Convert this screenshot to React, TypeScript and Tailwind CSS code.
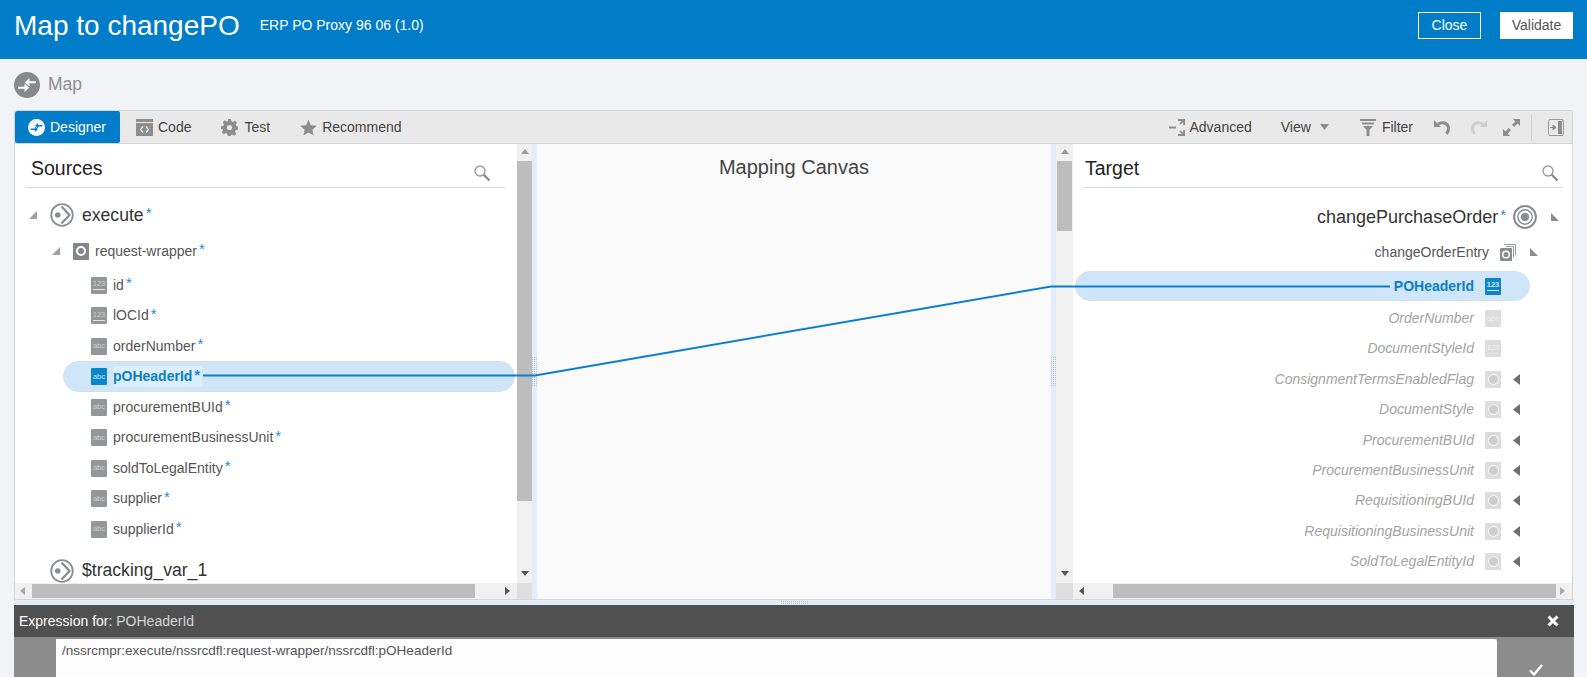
import React from 'react';

const SOURCE_ITEMS = [
  { name: 'id', kind: '123' },
  { name: 'lOCId', kind: '123' },
  { name: 'orderNumber', kind: 'abc' },
  { name: 'pOHeaderId', kind: 'abc', active: true },
  { name: 'procurementBUId', kind: 'abc' },
  { name: 'procurementBusinessUnit', kind: 'abc' },
  { name: 'soldToLegalEntity', kind: 'abc' },
  { name: 'supplier', kind: 'abc' },
  { name: 'supplierId', kind: 'abc' },
];

const TARGET_ITEMS = [
  { name: 'OrderNumber', kind: 'abc' },
  { name: 'DocumentStyleId', kind: '123' },
  { name: 'ConsignmentTermsEnabledFlag', kind: 'ring' },
  { name: 'DocumentStyle', kind: 'ring' },
  { name: 'ProcurementBUId', kind: 'ring' },
  { name: 'ProcurementBusinessUnit', kind: 'ring' },
  { name: 'RequisitioningBUId', kind: 'ring' },
  { name: 'RequisitioningBusinessUnit', kind: 'ring' },
  { name: 'SoldToLegalEntityId', kind: 'ring' },
];

const Star = () => <span className="ml-[2px] -mt-[5px] text-[15px] leading-none text-[#1e88e5]">*</span>;

const MapGlyph = ({ size, bg, fg }: { size: number; bg: string; fg: string }) => (
  <svg width={size} height={size} viewBox="0 0 26 26" className="shrink-0">
    <circle cx="13" cy="13" r="13" fill={bg} />
    <path d="M22 9.300h-6.500V6L10.800 10.300l4.700 4.300v-3.300H22zM4 16.700h6.500V20l4.700-4.300-4.700-4.300v3.300H4z" fill={fg} />
  </svg>
);

const Search = () => (
  <svg width="18" height="18" viewBox="0 0 18 18" fill="none" className="mt-[8px] shrink-0">
    <circle cx="7" cy="7" r="5" stroke="#9a9a9a" strokeWidth="1.4" />
    <path d="M10.8 10.8 16.5 16.5" stroke="#8a8a8a" strokeWidth="2.2" />
  </svg>
);

const ExecuteIcon = () => (
  <svg width="24" height="24" viewBox="0 0 24 24" fill="none" className="shrink-0">
    <circle cx="12" cy="12" r="10.800" stroke="#8a8d90" strokeWidth="1.800" />
    <circle cx="7.800" cy="12" r="2.800" fill="#8a8d90" />
    <path d="m11.500 3.500 8 8.500-8 8.500" stroke="#8a8d90" strokeWidth="2.200" />
  </svg>
);

const TypeIcon = ({ kind, active, faded }: { kind: string; active?: boolean; faded?: boolean }) => {
  const bg = active ? 'bg-[#0a86c9]' : faded ? 'bg-[#dcdcdc]' : 'bg-[#94979a]';
  if (kind === 'ring') {
    return (
      <span className={`flex h-[17px] w-[16px] shrink-0 items-center justify-center rounded-[1px] ${bg}`}>
        <span className="h-[11px] w-[11px] rounded-full border-[1.5px] border-white bg-[#cdcdcd]" />
      </span>
    );
  }
  return (
    <span
      className={`flex h-[17px] w-[16px] shrink-0 flex-col items-center justify-center rounded-[1px] text-[7.5px] leading-[8px] ${bg} ${
        active ? 'text-[#cfe6fa]' : 'text-[#cfcfcf]'
      } ${faded ? 'text-[#f2f2f2]' : ''}`}
    >
      {kind}
      {kind === '123' && <span className="mt-[1px] h-px w-[12px] bg-[#e4e4e4]" />}
    </span>
  );
};

const Corner = ({ className }: { className: string }) => (
  <svg width="8" height="8" viewBox="0 0 8 8" className={`shrink-0 ${className}`}>
    <path d="M8 0v8H0z" fill="#a0a0a0" />
  </svg>
);

const CornerRight = ({ className }: { className: string }) => (
  <svg width="8" height="8" viewBox="0 0 8 8" className={`shrink-0 ${className}`}>
    <path d="M0 0v8h8z" fill="#8d8d8d" />
  </svg>
);

const Arrow = ({ dir, color = '#555' }: { dir: 'u' | 'd' | 'l' | 'r'; color?: string }) => {
  const d = { u: 'M0 5 4 0l4 5z', d: 'M0 0h8L4 5z', l: 'M5 0v8L0 4z', r: 'M0 0v8l5-4z' }[dir];
  return (
    <svg width="8" height="8" viewBox="0 0 8 8" className="shrink-0">
      <path d={d} fill={color} />
    </svg>
  );
};

const Dots = ({ cols, rows }: { cols: number; rows: number }) => (
  <div className="grid gap-[1px]" style={{ gridTemplateColumns: `repeat(${cols}, 1px)` }}>
    {Array.from({ length: cols * rows }).map((_, i) => (
      <span key={i} className="h-px w-px bg-[#b9bfc5]" />
    ))}
  </div>
);

const Tab = ({ icon, label, className }: { icon: React.ReactNode; label: string; className: string }) => (
  <div className={`flex items-center text-[14px] text-[#444] ${className}`}>
    {icon}
    <span>{label}</span>
  </div>
);

export default function App() {
  return (
    <div className="relative h-[677px] w-[1587px] overflow-hidden bg-[#f1f3f6] font-['Liberation_Sans',Arial,sans-serif]">
      <header className="flex h-[59px] items-center bg-[#007cc8] pb-[8px] pl-[14px] pr-[14px] text-white">
        <h1 className="text-[28px] leading-none">Map to changePO</h1>
        <span className="ml-[20px] text-[14px]">ERP PO Proxy 96 06 (1.0)</span>
        <button className="ml-auto h-[27px] w-[63px] border border-white text-[14px]">Close</button>
        <button className="ml-[19px] h-[27px] w-[73px] bg-white text-[14px] text-[#555]">Validate</button>
      </header>

      <div className="flex h-[51px] items-center pl-[14px]">
        <MapGlyph size={26} bg="#868a8e" fg="#ffffff" />
        <span className="ml-[8px] text-[17.5px] text-[#8a8e92]">Map</span>
      </div>

      <div className="ml-[14px] w-[1559px] overflow-hidden rounded-t-[3px] border border-b-0 border-[#d6d6d6] bg-white">
        <div className="flex h-[33px] items-center border-b border-[#d6d6d6] bg-[#e9e9e9]">
          <div className="flex h-full w-[105px] items-center rounded-[2px] bg-[#007cc8] pl-[13px] text-[14px] text-white">
            <MapGlyph size={17} bg="#ffffff" fg="#007cc8" />
            <span className="ml-[5px]">Designer</span>
          </div>
          <Tab
            className="ml-[16px]"
            label="Code"
            icon={
              <svg width="17" height="17" viewBox="0 0 17 17" className="mr-[5px]">
                <path d="M0 0h17v3H0z" fill="#8d8d8d" />
                <path d="M0 4h17v13H0z" fill="#8d8d8d" />
                <path d="M7 7.5 4.5 10.5 7 13.5M10 7.5l2.5 3-2.5 3" stroke="#fff" strokeWidth="1.2" fill="none" />
              </svg>
            }
          />
          <Tab
            className="ml-[30px]"
            label="Test"
            icon={
              <svg width="17" height="17" viewBox="0 0 17 17" className="mr-[6px]">
                <path
                  d="M7 0h3l.4 2.3 1.6.7 2-1.3 2 2-1.3 2 .7 1.6L17 7.7v3l-2.3.4-.7 1.6 1.3 2-2 2-2-1.3-1.6.7L9.7 17h-3l-.4-2.3-1.6-.7-2 1.3-2-2 1.3-2-.7-1.6L0 10.3v-3l2.3-.4.7-1.6-1.3-2 2-2 2 1.3 1.6-.7z"
                  fill="#8d8d8d"
                />
                <circle cx="8.5" cy="8.5" r="2.6" fill="#e9e9e9" />
              </svg>
            }
          />
          <Tab
            className="ml-[30px]"
            label="Recommend"
            icon={
              <svg width="17" height="17" viewBox="0 0 17 17" className="mr-[5px]">
                <path d="m8.5.8 2.4 5.4 5.8.6-4.3 3.9 1.2 5.8-5.1-3-5.1 3 1.2-5.8L.3 6.8l5.8-.6z" fill="#8d8d8d" />
              </svg>
            }
          />
          <div className="ml-auto flex items-center text-[14px] text-[#444]">
            <svg width="17" height="17" viewBox="0 0 17 17" className="mr-[4px]">
              <path d="M0 7.500h7v2H0z" fill="#8d8d8d" />
              <path d="M9 0h7v6h-1.800V3.200l-2.600 2.400-1.200-1.200 2.500-2.500H9zM9 17h7v-6h-1.800v2.800l-2.600-2.400-1.200 1.200 2.500 2.500H9z" fill="#8d8d8d" />
            </svg>
            <span>Advanced</span>
            <span className="ml-[29px]">View</span>
            <svg width="9" height="6" viewBox="0 0 9 6" className="ml-[9px]">
              <path d="M0 0h9L4.5 6z" fill="#8d8d8d" />
            </svg>
            <svg width="16" height="17" viewBox="0 0 16 17" className="ml-[31px] mr-[6px]">
              <path d="M0 0h16v2H0zM1.500 3.500h13l-.9 2H2.400zM3 7h10l-3.500 4v6h-3v-6z" fill="#8d8d8d" />
            </svg>
            <span>Filter</span>
            <svg width="18" height="16" viewBox="0 0 18 16" fill="none" className="ml-[21px]">
              <path d="M0 1v7h7z" fill="#8d8d8d" />
              <path d="M4 5c4-2.500 9.500-1.500 10.500 3.500.4 2.500-.5 4.500-2 6.500" stroke="#8d8d8d" strokeWidth="3" />
            </svg>
            <svg width="18" height="16" viewBox="0 0 18 16" fill="none" className="ml-[17px]">
              <path d="M18 1v7h-7z" fill="#d0d0d0" />
              <path d="M14 5C10 2.500 4.500 3.500 3.500 8.500c-.4 2.500.5 4.500 2 6.500" stroke="#d0d0d0" strokeWidth="3" />
            </svg>
            <svg width="17" height="17" viewBox="0 0 17 17" className="ml-[16px]">
              <path d="M10 0h7v7l-2.400-2.400-3.400 3.400-2.200-2.200 3.400-3.400zM7 17H0v-7l2.400 2.400 3.400-3.400 2.200 2.200-3.400 3.400z" fill="#8d8d8d" />
            </svg>
            <span className="ml-[11px] h-[27px] w-px bg-[#cfcfcf]" />
            <svg width="16" height="17" viewBox="0 0 16 17" fill="none" className="ml-[16px] mr-[8px]">
              <rect x=".5" y=".5" width="15" height="16" rx="1.500" stroke="#9a9a9a" />
              <path d="M10 2h4v13h-4z" fill="#8d8d8d" />
              <path d="M2 8.500h4M5 6l3 2.500L5 11z" stroke="#8d8d8d" fill="#8d8d8d" />
            </svg>
          </div>
        </div>

        <div className="flex h-[455px]">
          <div className="flex w-[517px] shrink-0 flex-col">
            <div className="flex h-[439px]">
              <div className="w-[502px] pl-[10px] pr-[12px]">
                <div className="flex h-[44px] items-center justify-between border-b border-[#d5dde6] pl-[6px] pr-[14px] pt-[6px] text-[19.5px] text-[#222]">
                  <span>Sources</span>
                  <Search />
                </div>
                <div className="-ml-[10px] -mr-[12px] pt-[9px]">
                  <div className="flex h-[36px] items-center pl-[14px] text-[17.6px] text-[#333]">
                    <Corner className="mr-[13px]" />
                    <ExecuteIcon />
                    <span className="ml-[8px]">execute</span>
                    <Star />
                  </div>
                  <div className="mb-[1px] flex h-[36px] items-center pl-[37px] text-[14px] text-[#555]">
                    <Corner className="mr-[13px]" />
                    <span className="flex h-[17px] w-[16px] items-center justify-center rounded-[1px] bg-[#83878b]">
                      <span className="h-[10px] w-[10px] rounded-full border-2 border-white" />
                    </span>
                    <span className="ml-[6px]">request-wrapper</span>
                    <Star />
                  </div>
                  {SOURCE_ITEMS.map((item) => (
                    <div key={item.name} className="relative flex h-[30.5px] items-center pl-[76px] text-[14px] text-[#555]">
                      {item.active && (
                        <span className="absolute left-[48px] top-[-1px] h-[31px] w-[452px] rounded-full border border-[#d7dfe6] bg-[#cfe6fa]" />
                      )}
                      <span className="relative flex items-center">
                        <TypeIcon kind={item.kind} active={item.active} />
                        {item.active ? (
                          <span className="ml-[6px] flex items-center bg-[#dcedfb] pr-[2px] font-bold text-[#0a7fc2]">
                            {item.name}
                            <Star />
                          </span>
                        ) : (
                          <span className="ml-[6px] flex items-center">
                            {item.name}
                            <Star />
                          </span>
                        )}
                      </span>
                    </div>
                  ))}
                  <div className="mt-[11px] flex h-[30px] items-center pl-[35px] text-[17.6px] text-[#333]">
                    <ExecuteIcon />
                    <span className="ml-[8px]">$tracking_var_1</span>
                  </div>
                </div>
              </div>
              <div className="flex w-[15px] flex-col items-center bg-[#f0f0f0]">
                <div className="flex h-[17px] items-center">
                  <Arrow dir="u" color="#9a9a9a" />
                </div>
                <div className="h-[340px] w-full bg-[#bdbdbd]" />
                <div className="mt-auto flex h-[17px] items-center">
                  <Arrow dir="d" />
                </div>
              </div>
            </div>
            <div className="flex h-[16px] items-center bg-[#f0f0f0]">
              <div className="flex w-[17px] justify-center">
                <Arrow dir="l" color="#a8a8a8" />
              </div>
              <div className="h-[14px] w-[443px] bg-[#bdbdbd]" />
              <div className="flex w-[42px] justify-end pr-[4px]">
                <Arrow dir="r" />
              </div>
              <div className="h-full w-[15px] bg-[#dedede]" />
            </div>
          </div>

          <div className="flex w-[5px] shrink-0 items-center justify-center bg-[#e1eefa]">
            <Dots cols={3} rows={15} />
          </div>

          <div className="w-[514px] shrink-0 bg-[#fafafa] pt-[8px] text-center text-[20px] text-[#444]">Mapping Canvas</div>

          <div className="flex w-[5px] shrink-0 items-center justify-center bg-[#e1eefa]">
            <Dots cols={3} rows={15} />
          </div>

          <div className="flex min-w-0 flex-1 flex-col">
            <div className="flex h-[439px]">
              <div className="flex w-[17px] shrink-0 flex-col items-center bg-[#f0f0f0]">
                <div className="flex h-[17px] items-center">
                  <Arrow dir="u" color="#9a9a9a" />
                </div>
                <div className="h-[70px] w-[15px] bg-[#bdbdbd]" />
                <div className="mt-auto flex h-[17px] items-center">
                  <Arrow dir="d" />
                </div>
              </div>
              <div className="min-w-0 flex-1">
                <div className="ml-[10px] mr-[9px] flex h-[44px] items-center justify-between border-b border-[#d5dde6] pl-[2px] pr-[4px] pt-[6px] text-[19.5px] text-[#222]">
                  <span>Target</span>
                  <Search />
                </div>
                <div className="flex h-[46px] items-center justify-end pr-[13px] pt-[12px] text-[18px] text-[#333]">
                  <span>changePurchaseOrder</span>
                  <Star />
                  <svg width="24" height="24" viewBox="0 0 24 24" fill="none" className="ml-[7px]">
                    <circle cx="12" cy="12" r="10.900" stroke="#8a8d90" strokeWidth="2" />
                    <circle cx="12" cy="12" r="7.200" stroke="#8a8d90" strokeWidth="1.400" />
                    <circle cx="12" cy="12" r="4.200" fill="#8a8d90" />
                  </svg>
                  <CornerRight className="ml-[14px]" />
                </div>
                <div className="mb-[1px] flex h-[36px] items-center justify-end pr-[34px] text-[14px] text-[#555]">
                  <span>changeOrderEntry</span>
                  <svg width="16" height="17" viewBox="0 0 16 17" fill="none" className="ml-[11px]">
                    <path d="M4 .500h11.500V11M6 2.500h7.500V13" stroke="#9a9a9a" />
                    <rect x="0" y="4" width="12" height="13" rx="1" fill="#8a8d90" />
                    <circle cx="6" cy="10.500" r="3.300" fill="#8a8d90" stroke="#fff" strokeWidth="1.500" />
                  </svg>
                  <CornerRight className="ml-[14px]" />
                </div>
                <div className="relative mb-[2px] flex h-[30.4px] items-center justify-end pr-[71px] text-[14px] font-bold text-[#0a7fc2]">
                  <span className="absolute left-[2px] top-0 h-[30px] w-[455px] rounded-full border border-[#d7dfe6] bg-[#cfe6fa]" />
                  <span className="relative">POHeaderId</span>
                  <span className="relative ml-[11px]">
                    <TypeIcon kind="123" active />
                  </span>
                </div>
                {TARGET_ITEMS.map((item) => (
                  <div key={item.name} className="flex h-[30.4px] items-center justify-end pr-[52px] text-[14px] italic text-[#a3a3a3]">
                    <span>{item.name}</span>
                    <span className="ml-[11px]">
                      <TypeIcon kind={item.kind} faded />
                    </span>
                    <span className="flex w-[19px] justify-end">
                      {item.kind === 'ring' && (
                        <svg width="7" height="11" viewBox="0 0 7 11" className="shrink-0">
                          <path d="M7 0v11L0 5.500z" fill="#6e6e6e" />
                        </svg>
                      )}
                    </span>
                  </div>
                ))}
              </div>
            </div>
            <div className="flex h-[16px] items-center bg-[#f0f0f0]">
              <div className="h-full w-[17px] bg-[#dedede]" />
              <div className="flex w-[40px] justify-start pl-[6px]">
                <Arrow dir="l" />
              </div>
              <div className="h-[14px] w-[443px] bg-[#bdbdbd]" />
              <div className="flex flex-1 justify-center">
                <Arrow dir="r" color="#a8a8a8" />
              </div>
            </div>
          </div>
        </div>
      </div>

      <div className="ml-[14px] flex h-[6px] w-[1560px] items-center justify-center border-t border-[#d6d6d6] bg-[#e1eefa]">
        <Dots cols={14} rows={2} />
      </div>

      <div className="ml-[14px] w-[1560px]">
        <div className="flex h-[32px] items-center justify-between bg-[#505050] pl-[5px] pr-[15px] text-[14px]">
          <span className="text-white">
            Expression for: <span className="text-[#d4d4d4]">POHeaderId</span>
          </span>
          <svg width="12" height="12" viewBox="0 0 12 12">
            <path d="M1.500 1.500 10.500 10.500M10.500 1.500 1.500 10.500" stroke="#fff" strokeWidth="3" />
          </svg>
        </div>
        <div className="flex h-[40px] bg-[#8c8c8c] pt-[2px]">
          <div className="ml-[42px] w-[1441px] rounded-tr-[2px] bg-[#fcfcfc] pl-[6px] pt-[2px] text-[13.5px] text-[#555]">
            /nssrcmpr:execute/nssrcdfl:request-wrapper/nssrcdfl:pOHeaderId
          </div>
          <div className="flex flex-1 justify-center pt-[25px]">
            <svg width="14" height="12" viewBox="0 0 14 12" fill="none">
              <path d="M1 6.500 5 10.500 13 1" stroke="#fff" strokeWidth="2.400" />
            </svg>
          </div>
        </div>
      </div>

      <svg width="1587" height="677" className="pointer-events-none absolute left-0 top-0" fill="none">
        <path d="M203 375.500H535L1051 286.500H1390" stroke="#0a7fd0" strokeWidth="2" />
      </svg>
    </div>
  );
}
